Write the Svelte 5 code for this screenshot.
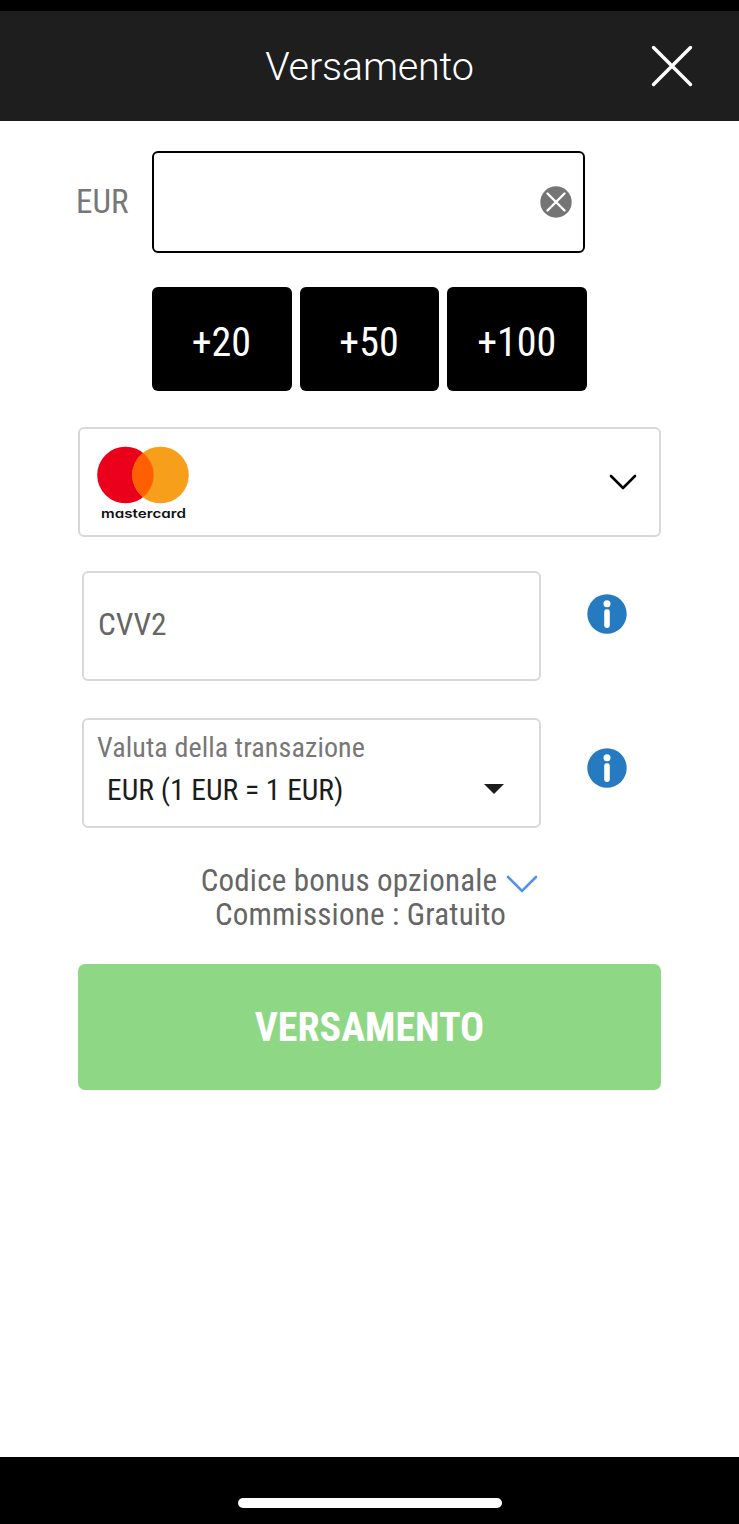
<script>
  let amount = $state(0)

  const presets = [20, 50, 100]
  const add = (n) => (amount += n)
</script>

{#snippet info()}
  <svg class="info" viewBox="0 0 40 40" aria-hidden="true">
    <circle cx="20" cy="20" r="19.7" fill="#267bc0" />
    <circle cx="20" cy="9.8" r="3.5" fill="#fff" />
    <rect x="17.2" y="15.3" width="5.6" height="18.6" rx="2.4" fill="#fff" />
  </svg>
{/snippet}

<div class="screen">
  <header>
    <h1>Versamento</h1>
    <button class="close" aria-label="Chiudi">
      <svg viewBox="0 0 42 42"><path d="M2.5 2.5 39.5 39.5M39.5 2.5 2.5 39.5" /></svg>
    </button>
  </header>

  <main>
    <div class="amount">
      <span class="currency">EUR</span>
      <div class="amount-box">
        <button class="clear" aria-label="Cancella" onclick={() => (amount = 0)}>
          <svg viewBox="0 0 32 32">
            <circle cx="16" cy="16" r="15.7" fill="#757575" />
            <path d="M7.5 7.5 24.5 24.5M24.5 7.5 7.5 24.5" />
          </svg>
        </button>
      </div>
    </div>

    <div class="presets">
      {#each presets as n}
        <button onclick={() => add(n)}>+{n}</button>
      {/each}
    </div>

    <div class="card">
      <svg class="mastercard" viewBox="0 0 94 76">
        <circle cx="29.5" cy="29" r="28.3" fill="#eb001b" />
        <circle cx="64.5" cy="29" r="28.3" fill="#f79e1b" />
        <path d="M47 6.8a28.3 28.3 0 0 1 0 44.4a28.3 28.3 0 0 1 0-44.4z" fill="#ff5f00" />
        <text x="5" y="72" textLength="85" lengthAdjust="spacingAndGlyphs">mastercard</text>
      </svg>
      <svg class="chevron" viewBox="0 0 28 16"><path d="M2 2 14 14 26 2" /></svg>
    </div>

    <div class="row cvv">
      <div class="field"><span class="placeholder">CVV2</span></div>
      {@render info()}
    </div>

    <div class="row valuta">
      <div class="field select">
        <span class="label">Valuta della transazione</span>
        <div class="option">
          <span>EUR (1 EUR = 1 EUR)</span>
          <svg class="caret" viewBox="0 0 20 10"><path d="M0 0H20L10 10z" /></svg>
        </div>
      </div>
      {@render info()}
    </div>

    <div class="notes">
      <div class="bonus">
        <span>Codice bonus opzionale</span>
        <svg viewBox="0 0 32 18"><path d="M2 2 16 16 30 2" /></svg>
      </div>
      <div class="fee">Commissione : Gratuito</div>
    </div>

    <button class="submit">VERSAMENTO</button>
  </main>

  <footer><div class="home"></div></footer>
</div>

<style>
  :global(body) {
    margin: 0;
  }
  .screen {
    display: flex;
    flex-direction: column;
    height: 1524px;
    background: #fff;
    font-family: 'Roboto Condensed', Roboto, sans-serif;
    font-stretch: 75%;
    color: #666;
  }
  button {
    border: 0;
    padding: 0;
    background: none;
    font: inherit;
    font-stretch: 75%;
    cursor: pointer;
  }
  svg {
    display: block;
    flex: none;
  }
  header {
    display: grid;
    grid-template-columns: 1fr auto 1fr;
    align-items: center;
    height: 110px;
    border-top: 11px solid #000;
    background: #1e1e1e;
  }
  h1 {
    grid-column: 2;
    margin: 0;
    font-family: Roboto, sans-serif;
    font-stretch: normal;
    font-size: 39.6px;
    font-weight: 290;
    letter-spacing: -0.2px;
    color: #fff;
  }
  .close {
    justify-self: end;
    margin-right: 46px;
  }
  .close svg {
    width: 42px;
    height: 42px;
  }
  .close path {
    stroke: #fff;
    stroke-width: 3.4;
    stroke-linecap: round;
  }
  main {
    flex: 1;
    padding: 30px 78px 0;
  }
  .amount {
    display: flex;
    align-items: center;
  }
  .currency {
    width: 76px;
    margin-left: -2px;
    padding-bottom: 1px;
    font-size: 33px;
    color: #777;
  }
  .amount-box {
    display: flex;
    align-items: center;
    justify-content: flex-end;
    box-sizing: border-box;
    width: 433px;
    height: 102px;
    padding-right: 11px;
    border: 2px solid #000;
    border-radius: 6px;
  }
  .clear svg {
    width: 32px;
    height: 32px;
  }
  .clear path {
    stroke: #fff;
    stroke-width: 2.4;
    stroke-linecap: round;
  }
  .presets {
    display: flex;
    gap: 8px;
    margin: 34px 0 0 74px;
  }
  .presets button {
    width: 139.7px;
    height: 104px;
    padding: 6px 1px 0 0;
    border-radius: 6px;
    background: #000;
    font-size: 40px;
    color: #fff;
  }
  .card {
    display: flex;
    align-items: center;
    justify-content: space-between;
    box-sizing: border-box;
    height: 110px;
    margin-top: 36px;
    padding: 0 22px 0 16px;
    border: 2px solid #d8d8d8;
    border-radius: 6px;
  }
  .mastercard {
    width: 94px;
    height: 76px;
    margin-top: 4px;
  }
  .mastercard text {
    font-family: Inter, sans-serif;
    font-feature-settings: 'cv11';
    font-stretch: normal;
    font-size: 12.7px;
    font-weight: 600;
    fill: #111;
  }
  .chevron {
    width: 28px;
    height: 16px;
  }
  .chevron path {
    fill: none;
    stroke: #000;
    stroke-width: 2.6;
    stroke-linecap: round;
    stroke-linejoin: round;
  }
  .row {
    display: flex;
    margin-left: 4px;
  }
  .field {
    box-sizing: border-box;
    width: 459px;
    height: 110px;
    border: 2px solid #d8d8d8;
    border-radius: 6px;
  }
  .info {
    width: 40px;
    height: 40px;
    margin-left: 46px;
  }
  .cvv {
    margin-top: 34px;
  }
  .cvv .info {
    margin-top: 23px;
  }
  .cvv .field {
    display: flex;
    align-items: center;
    padding: 0 0 3px 14px;
  }
  .placeholder {
    font-size: 31.4px;
  }
  .valuta {
    margin-top: 37px;
  }
  .valuta .info {
    margin-top: 30px;
  }
  .select {
    padding: 10px 35px 0 13px;
  }
  .label {
    display: block;
    font-size: 28px;
    line-height: 35px;
    letter-spacing: 0.12px;
    color: #777;
  }
  .option {
    display: flex;
    align-items: center;
    justify-content: space-between;
    padding-left: 10px;
    font-size: 29.5px;
    line-height: 50px;
    color: #1c1c1c;
  }
  .caret {
    width: 20px;
    height: 10px;
    margin-bottom: 2px;
  }
  .caret path {
    fill: #1c1c1c;
  }
  .notes {
    margin-top: 36px;
    font-size: 31px;
    line-height: 34px;
    letter-spacing: 0.2px;
  }
  .bonus {
    display: flex;
    align-items: center;
    justify-content: center;
    gap: 9px;
  }
  .bonus svg {
    width: 32px;
    height: 18px;
    margin-top: 6px;
  }
  .bonus path {
    fill: none;
    stroke: #5291f0;
    stroke-width: 2.6;
    stroke-linecap: round;
  }
  .fee {
    padding-right: 18px;
    text-align: center;
  }
  .submit {
    display: block;
    width: 583px;
    height: 126px;
    margin-top: 32px;
    border-radius: 7px;
    background: #8ed885;
    font-size: 40px;
    font-weight: 700;
    color: #fff;
  }
  footer {
    display: flow-root;
    height: 67px;
    background: #000;
  }
  .home {
    width: 264px;
    height: 10px;
    margin: 41px auto 0;
    border-radius: 5px;
    background: #fff;
  }
</style>
